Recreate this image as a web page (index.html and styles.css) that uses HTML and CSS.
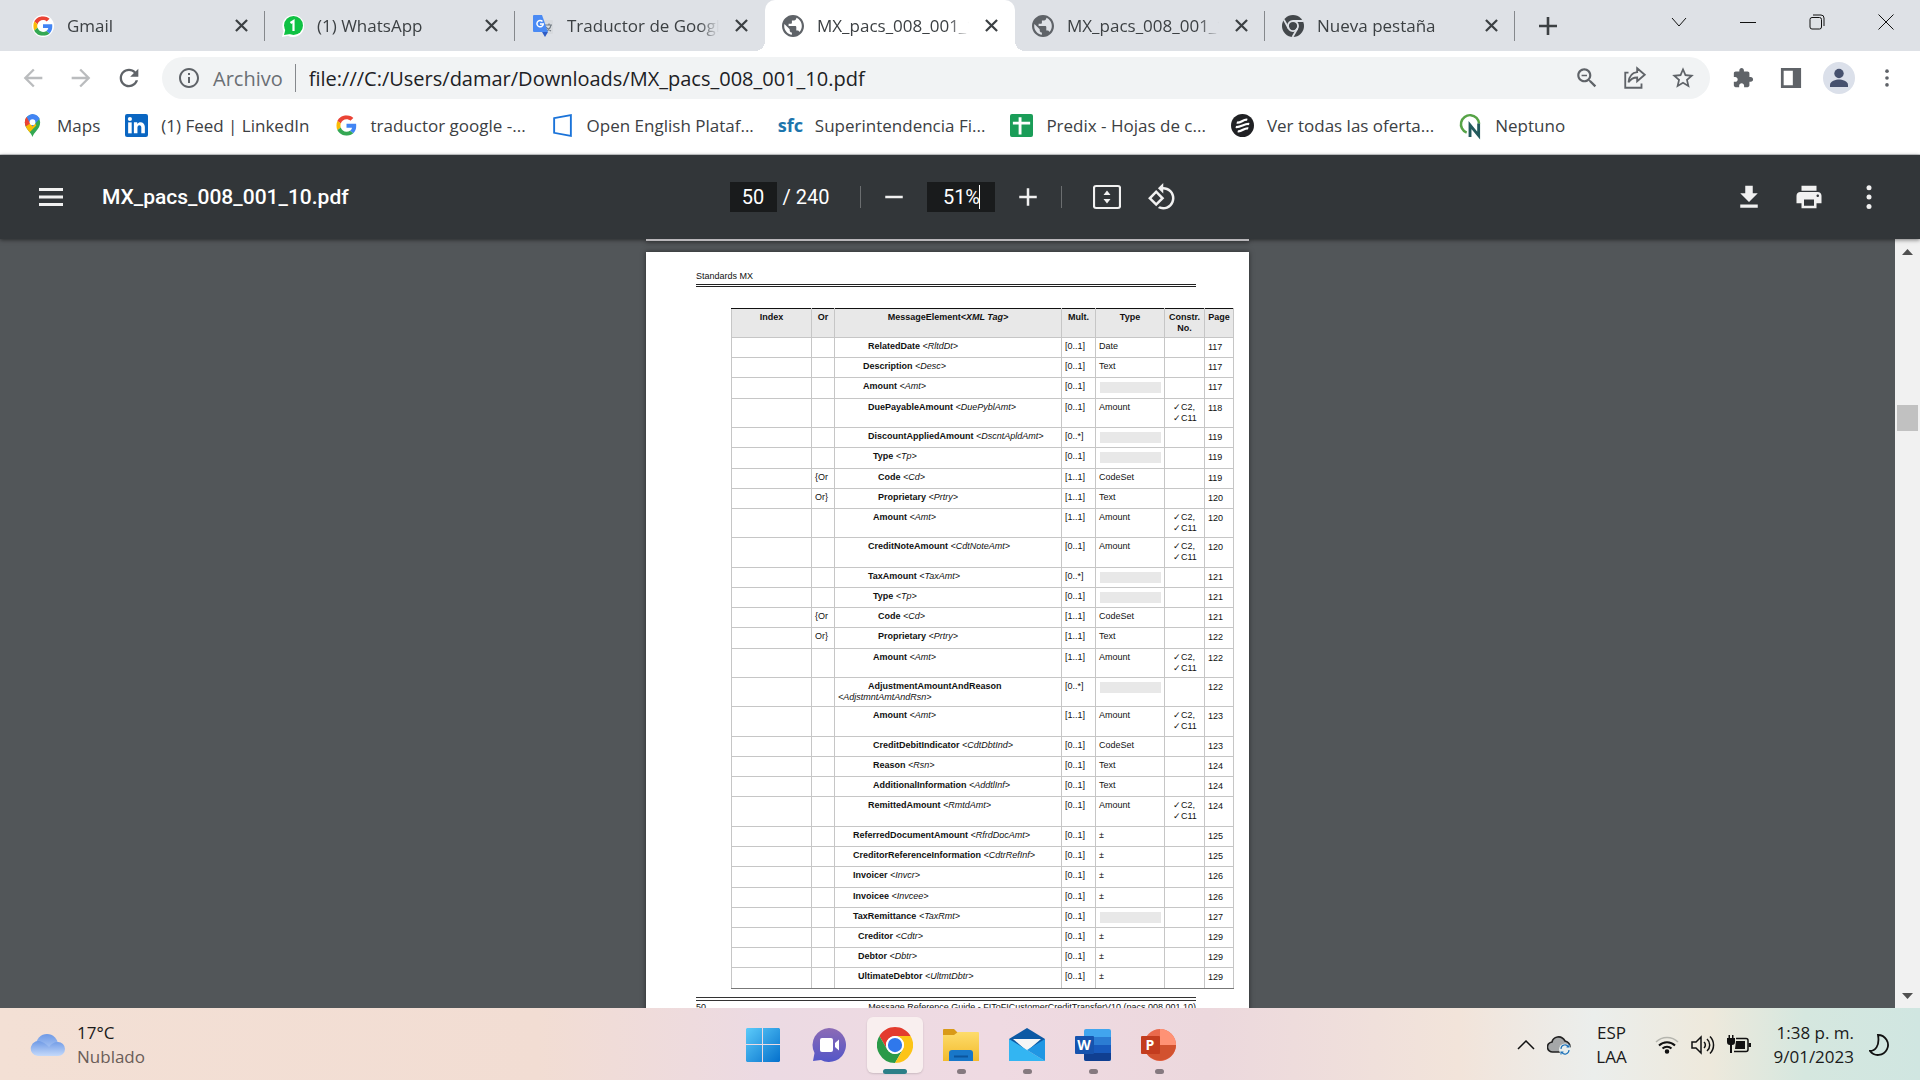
FILE: index.html
```html
<!DOCTYPE html>
<html lang="es">
<head>
  <meta charset="UTF-8">
  <title>MX_pacs_008_001_10.pdf</title>
  <link rel="stylesheet" href="styles.css">
</head>
<body>
  <svg class="defs" aria-hidden="true">
    <symbol id="google" viewBox="0 0 48 48">
      <path fill="#ea4335" d="M24 9.5c3.54 0 6.71 1.22 9.21 3.6l6.85-6.85C35.9 2.38 30.47 0 24 0 14.62 0 6.51 5.38 2.56 13.22l7.98 6.19C12.43 13.72 17.74 9.5 24 9.5z"/>
      <path fill="#4285f4" d="M46.98 24.55c0-1.57-.15-3.09-.38-4.55H24v9.02h12.94c-.58 2.96-2.26 5.48-4.78 7.18l7.73 6c4.51-4.18 7.09-10.36 7.09-17.65z"/>
      <path fill="#fbbc05" d="M10.53 28.59c-.48-1.45-.76-2.99-.76-4.59s.27-3.14.76-4.59l-7.98-6.19C.92 16.46 0 20.12 0 24c0 3.88.92 7.54 2.56 10.78l7.97-6.19z"/>
      <path fill="#34a853" d="M24 48c6.48 0 11.93-2.13 15.89-5.81l-7.73-6c-2.15 1.45-4.92 2.3-8.16 2.3-6.26 0-11.57-4.22-13.47-9.91l-7.98 6.19C6.51 42.62 14.62 48 24 48z"/>
    </symbol>
    <symbol id="globe" viewBox="2 2 20 20">
      <path d="M12 2C6.480 2 2 6.480 2 12s4.480 10 10 10 10-4.480 10-10S17.520 2 12 2zm-1 17.930c-3.950-.49-7-3.850-7-7.930 0-.62.08-1.210.21-1.790L9 15v1c0 1.100.9 2 2 2v1.930zm6.900-2.540c-.26-.81-1-1.390-1.900-1.390h-1v-3c0-.55-.45-1-1-1H8v-2h2c.55 0 1-.45 1-1V7h2c1.100 0 2-.9 2-2v-.41c2.930 1.190 5 4.060 5 7.410 0 2.080-.8 3.970-2.100 5.390z"/>
    </symbol>
    <symbol id="close" viewBox="0 0 14 14">
      <path d="M1 1l12 12M13 1L1 13" fill="none" stroke="#3c4043" stroke-width="2.4"/>
    </symbol>
    <symbol id="dots" viewBox="0 0 24 24">
      <circle cx="12" cy="4.500" r="2"/><circle cx="12" cy="12" r="2"/><circle cx="12" cy="19.500" r="2"/>
    </symbol>
  </svg>

  <header class="tabs">
    <div class="tab">
      <svg class="favicon round" viewBox="-3 -3 54 54"><use href="#google" width="48" height="48"/></svg>
      <span class="title">Gmail</span>
      <button class="tab-close" aria-label="Cerrar"><svg><use href="#close"/></svg></button>
    </div>
    <div class="tab">
      <svg class="favicon" viewBox="0 0 22 22"><path fill="#fff" d="M11 0a11 11 0 1 1-5 20.700L0 22l1.500-6A11 11 0 0 1 11 0z"/><circle cx="11.500" cy="10.500" r="9.500" fill="#0fc143"/><path fill="#0fc143" d="M2 20l1.500-6 5 5z"/><path d="M8.500 8l3-2v10" fill="none" stroke="#fff" stroke-width="2.200"/></svg>
      <span class="title">(1) WhatsApp</span>
      <button class="tab-close" aria-label="Cerrar"><svg><use href="#close"/></svg></button>
    </div>
    <div class="tab">
      <svg class="favicon" viewBox="0 0 22 22"><path fill="#d7dade" d="M10 5h10a1 1 0 0 1 1 1v12a1 1 0 0 1-1 1h-6z"/><path d="M13 10h7m-3-1.500V10m2 0c0 3-3 5-4 6m-1-4c1 2 3 3 5 4" fill="none" stroke="#737b83" stroke-width="1.200"/><path fill="#2f5cc5" d="M10 17l6 0-3 5z"/><path fill="#4a8af4" d="M2 0h8l6 17H2a1 1 0 0 1-1-1V1a1 1 0 0 1 1-1z"/><path d="M10.500 6.500A3.200 3.200 0 1 0 11.300 9H8" fill="none" stroke="#fff" stroke-width="1.500"/></svg>
      <span class="title">Traductor de Google</span>
      <button class="tab-close" aria-label="Cerrar"><svg><use href="#close"/></svg></button>
    </div>
    <div class="tab active">
      <svg class="favicon grey"><use href="#globe"/></svg>
      <span class="title">MX_pacs_008_001_10.pdf</span>
      <button class="tab-close" aria-label="Cerrar"><svg><use href="#close"/></svg></button>
    </div>
    <div class="tab">
      <svg class="favicon grey"><use href="#globe"/></svg>
      <span class="title">MX_pacs_008_001_10.pdf</span>
      <button class="tab-close" aria-label="Cerrar"><svg><use href="#close"/></svg></button>
    </div>
    <div class="tab">
      <svg class="favicon" viewBox="0 0 48 48"><circle cx="24" cy="24" r="24" fill="#43474b"/><circle cx="24" cy="24" r="11" fill="none" stroke="#dee1e6" stroke-width="4"/><path d="M24 13h23M14.500 29.500L4 10M33.500 29.500L23 48" stroke="#dee1e6" stroke-width="4"/></svg>
      <span class="title">Nueva pestaña</span>
      <button class="tab-close" aria-label="Cerrar"><svg><use href="#close"/></svg></button>
    </div>
    <button class="new-tab" aria-label="Nueva pestaña"><svg viewBox="0 0 18 18"><path d="M9 0v18M0 9h18" stroke="#3c4043" stroke-width="2.600"/></svg></button>
    <div class="window-controls">
      <button aria-label="Buscar pestañas"><svg viewBox="0 0 16 16"><path d="M1 4l7 8 7-8"/></svg></button>
      <button aria-label="Minimizar"><svg viewBox="0 0 16 16"><path d="M0 8.500h16"/></svg></button>
      <button aria-label="Restaurar"><svg viewBox="0 0 16 16"><rect x="1" y="3.500" width="11.500" height="11.500" rx="2"/><path d="M4 1h8a3 3 0 0 1 3 3v8"/></svg></button>
      <button aria-label="Cerrar ventana"><svg viewBox="0 0 16 16"><path d="M.5.5l15 15m0-15l-15 15"/></svg></button>
    </div>
  </header>

  <nav class="toolbar">
    <button class="muted" aria-label="Atrás"><svg viewBox="0 0 24 24"><path d="M20 11H7.830l5.590-5.590L12 4l-8 8 8 8 1.410-1.410L7.830 13H20v-2z"/></svg></button>
    <button class="muted" aria-label="Adelante"><svg viewBox="0 0 24 24"><path d="M12 4l-1.410 1.410L16.170 11H4v2h12.170l-5.580 5.590L12 20l8-8z"/></svg></button>
    <button aria-label="Recargar"><svg viewBox="0 0 24 24"><path d="M17.650 6.350C16.200 4.900 14.210 4 12 4c-4.420 0-7.990 3.580-7.990 8s3.570 8 7.990 8c3.730 0 6.840-2.550 7.730-6h-2.080c-.82 2.330-3.040 4-5.650 4-3.310 0-6-2.690-6-6s2.690-6 6-6c1.660 0 3.140.69 4.220 1.780L13 11h7V4l-2.350 2.350z"/></svg></button>
    <div class="omnibox">
      <svg class="info" viewBox="0 0 24 24"><path d="M11 7h2v2h-2zm0 4h2v6h-2zm1-9C6.480 2 2 6.480 2 12s4.480 10 10 10 10-4.480 10-10S17.520 2 12 2zm0 18c-4.410 0-8-3.590-8-8s3.590-8 8-8 8 3.590 8 8-3.590 8-8 8z"/></svg>
      <label for="url">Archivo</label>
      <input id="url" type="text" value="file:///C:/Users/damar/Downloads/MX_pacs_008_001_10.pdf">
      <button aria-label="Zoom"><svg viewBox="0 0 24 24"><path d="M15.500 14h-.79l-.28-.27C15.410 12.590 16 11.110 16 9.500 16 5.910 13.090 3 9.500 3S3 5.910 3 9.500 5.910 16 9.500 16c1.610 0 3.090-.59 4.230-1.570l.27.28v.79l5 4.990L20.490 19l-4.990-5zm-6 0C7.010 14 5 11.990 5 9.500S7.010 5 9.500 5 14 7.010 14 9.500 11.990 14 9.500 14zM7 9h5v1.300H7z"/></svg></button>
      <button aria-label="Compartir"><svg viewBox="0 0 24 24"><path d="M6 7H3v14h15v-4M14 3l7 6-7 6v-3.500c-4 0-6 1.500-8 4.500.500-5 3-9 8-9.500z" fill="none" stroke="#5f6368" stroke-width="1.700"/></svg></button>
      <button aria-label="Favorito"><svg viewBox="0 0 24 24"><path d="M22 9.240l-7.190-.62L12 2 9.190 8.630 2 9.240l5.460 4.730L5.820 21 12 17.270 18.180 21l-1.630-7.030L22 9.240zM12 15.400l-3.760 2.270 1-4.280-3.320-2.880 4.380-.38L12 6.100l1.710 4.040 4.380.38-3.320 2.880 1 4.280L12 15.400z"/></svg></button>
    </div>
    <button aria-label="Extensiones"><svg class="small" viewBox="0 0 24 24"><path d="M20.500 11H19V7c0-1.100-.9-2-2-2h-4V3.500C13 2.120 11.880 1 10.500 1S8 2.120 8 3.500V5H4c-1.100 0-1.990.9-1.990 2v3.800H3.500c1.490 0 2.700 1.210 2.700 2.700s-1.210 2.700-2.700 2.700H2V20c0 1.100.9 2 2 2h3.800v-1.500c0-1.490 1.210-2.700 2.700-2.700 1.490 0 2.700 1.210 2.700 2.700V22H17c1.100 0 2-.9 2-2v-4h1.500c1.380 0 2.500-1.120 2.500-2.500S21.880 11 20.500 11z"/></svg></button>
    <button aria-label="Panel lateral"><svg class="small" viewBox="0 0 24 24"><path fill-rule="evenodd" d="M1 1h22v22H1zM4 4v16h10V4z"/></svg></button>
    <button aria-label="Perfil"><svg class="avatar" viewBox="0 0 32 32"><circle cx="16" cy="16" r="16" fill="#dbe0ea"/><circle cx="16" cy="11.500" r="4.700"/><path d="M7 25v-2c0-4 6-5.500 9-5.500s9 1.500 9 5.500v2z"/></svg></button>
    <button aria-label="Menú"><svg class="small"><use href="#dots"/></svg></button>
  </nav>

  <nav class="bookmarks">
    <a href="#"><svg viewBox="0 0 24 24"><path fill="#34a853" d="M12 24c-1-5-8-8-8-15.500a8 8 0 0 1 16 0C20 16 13 19 12 24z"/><path fill="#fbbc04" d="M5 12.500L12 4l4 8-7 7c-2-2.500-3.500-4.500-4-6.500z"/><path fill="#ea4335" d="M4 8.500C4 5.500 5.500 3 6 3l6 5-7 5c-.7-1.500-1-3-1-4.500z"/><path fill="#4285f4" d="M6 3a8 8 0 0 1 13.500 2L12 13 8 7z"/><circle cx="12" cy="8.500" r="3" fill="#fff"/></svg>Maps</a>
    <a href="#"><svg viewBox="0 0 22 22"><rect width="22" height="22" rx="2" fill="#0a66c2"/><rect x="3" y="8" width="3.400" height="10.500" fill="#fff"/><circle cx="4.700" cy="4.800" r="2" fill="#fff"/><path fill="#fff" d="M8.500 8h3.200v1.500c2-3 7.300-2 7.300 2.800v6.200h-3.400v-5.500c0-3.200-3.700-3-3.700 0v5.500H8.500z"/></svg>(1) Feed | LinkedIn</a>
    <a href="#"><svg viewBox="-3 -3 54 54"><use href="#google" width="48" height="48"/></svg>traductor google -...</a>
    <a href="#"><svg viewBox="0 0 22 22"><path d="M3 4l16-3v20L3 18z" fill="none" stroke="#1a73d9" stroke-width="1.800"/></svg>Open English Plataf...</a>
    <a href="#"><svg viewBox="0 0 24 24"><text class="sfc" x="12" y="19">sfc</text></svg>Superintendencia Fi...</a>
    <a href="#"><svg viewBox="0 0 24 24"><rect width="24" height="24" rx="2" fill="#1a9d58"/><path d="M10.500 3.500v18M3 9.500h18" stroke="#fff" stroke-width="3"/></svg>Predix - Hojas de c...</a>
    <a href="#"><svg viewBox="0 0 24 24"><circle cx="12" cy="12" r="12" fill="#202124"/><path d="M6 9c4 1 7-4 11-3M5 13.500c4 1 10-4 14-3M7 18c4 1 7-4 11-3" fill="none" stroke="#fff" stroke-width="2.400"/></svg>Ver todas las oferta...</a>
    <a href="#"><svg viewBox="0 0 24 24"><path d="M8 19.500A9.500 9.500 0 1 1 21 10" fill="none" stroke="#56a346" stroke-width="2.600"/><path d="M11.500 24V11.500l9 11V10" fill="none" stroke="#235a5c" stroke-width="3"/></svg>Neptuno</a>
  </nav>

  <section class="pdf-bar">
    <div class="pdf-left">
      <button aria-label="Menú lateral"><svg viewBox="0 0 24 24"><path d="M0 3h24v3H0zm0 7.500h24v3H0zM0 18h24v3H0z"/></svg></button>
      <span class="file-name">MX_pacs_008_001_10.pdf</span>
    </div>
    <div class="pdf-center">
      <input class="page-input" type="text" value="50" aria-label="Página">
      <span class="pages">/ 240</span>
      <span class="rule"></span>
      <button aria-label="Reducir"><svg viewBox="0 0 24 24"><path d="M5 11h14v2H5z"/></svg></button>
      <div class="zoom"><input type="text" value="51%" aria-label="Zoom"><i class="caret"></i></div>
      <button aria-label="Ampliar"><svg viewBox="0 0 24 24"><path d="M19 13h-6v6h-2v-6H5v-2h6V5h2v6h6v2z"/></svg></button>
      <span class="rule"></span>
      <button class="fit" aria-label="Ajustar a la página"><svg viewBox="0 0 28 24"><rect x="1" y="1" width="26" height="22" rx="2" fill="none" stroke="#f1f1f1" stroke-width="2.200"/><path d="M10.500 10L14 5.500l3.500 4.500zM10.500 14l3.500 4.500 3.500-4.500z"/></svg></button>
      <button class="rotate" aria-label="Girar"><svg viewBox="0 0 24 24"><path d="M7.340 6.410L.86 12.900l6.490 6.480 6.490-6.480-6.500-6.490zM3.690 12.900l3.660-3.660L11 12.900l-3.660 3.660-3.650-3.660zm15.670-6.260C17.610 4.880 15.300 4 13 4V.76L8.760 5 13 9.240V6c1.790 0 3.580.68 4.950 2.050 2.730 2.730 2.730 7.170 0 9.900C16.580 19.320 14.790 20 13 20c-.97 0-1.940-.21-2.840-.61l-1.490 1.490C10.020 21.620 11.510 22 13 22c2.300 0 4.610-.88 6.360-2.640 3.520-3.510 3.520-9.210 0-12.720z"/></svg></button>
    </div>
    <div class="pdf-right">
      <button aria-label="Descargar"><svg viewBox="0 0 24 24"><path d="M19 9h-4V3H9v6H5l7 7 7-7zM5 18v2.500h14V18H5z"/></svg></button>
      <button aria-label="Imprimir"><svg viewBox="0 0 24 24"><path d="M19 8H5c-1.660 0-3 1.340-3 3v6h4v4h12v-4h4v-6c0-1.660-1.340-3-3-3zm-3 11H8v-5h8v5zm3-7c-.55 0-1-.45-1-1s.45-1 1-1 1 .45 1 1-.45 1-1 1zm-1-9H6v4h12V3z"/></svg></button>
      <button aria-label="Más"><svg><use href="#dots"/></svg></button>
    </div>
  </section>

  <main class="viewer">
    <div class="pages-view">
      <div class="prev-page"></div>
      <article class="page">
        <div class="page-head">Standards MX</div>
        <table>
          <colgroup><col class="c-index"><col class="c-or"><col><col class="c-mult"><col class="c-type"><col class="c-constr"><col class="c-page"></colgroup>
          <thead>
            <tr><th>Index</th><th>Or</th><th>MessageElement<i>&lt;XML Tag&gt;</i></th><th>Mult.</th><th>Type</th><th>Constr. No.</th><th>Page</th></tr>
          </thead>
          <tbody>
            <tr><td></td><td></td><td class="l6"><b>RelatedDate</b> <i>&lt;RltdDt&gt;</i></td><td>[0..1]</td><td>Date</td><td></td><td>117</td></tr>
            <tr><td></td><td></td><td class="l5"><b>Description</b> <i>&lt;Desc&gt;</i></td><td>[0..1]</td><td>Text</td><td></td><td>117</td></tr>
            <tr><td></td><td></td><td class="l5"><b>Amount</b> <i>&lt;Amt&gt;</i></td><td>[0..1]</td><td><div class="blank"></div></td><td></td><td>117</td></tr>
            <tr><td></td><td></td><td class="l6"><b>DuePayableAmount</b> <i>&lt;DuePyblAmt&gt;</i></td><td>[0..1]</td><td>Amount</td><td>✓C2,<br>✓C11</td><td>118</td></tr>
            <tr><td></td><td></td><td class="l6"><b>DiscountAppliedAmount</b> <i>&lt;DscntApldAmt&gt;</i></td><td>[0..*]</td><td><div class="blank"></div></td><td></td><td>119</td></tr>
            <tr><td></td><td></td><td class="l7"><b>Type</b> <i>&lt;Tp&gt;</i></td><td>[0..1]</td><td><div class="blank"></div></td><td></td><td>119</td></tr>
            <tr><td></td><td>{Or</td><td class="l8"><b>Code</b> <i>&lt;Cd&gt;</i></td><td>[1..1]</td><td>CodeSet</td><td></td><td>119</td></tr>
            <tr><td></td><td>Or}</td><td class="l8"><b>Proprietary</b> <i>&lt;Prtry&gt;</i></td><td>[1..1]</td><td>Text</td><td></td><td>120</td></tr>
            <tr><td></td><td></td><td class="l7"><b>Amount</b> <i>&lt;Amt&gt;</i></td><td>[1..1]</td><td>Amount</td><td>✓C2,<br>✓C11</td><td>120</td></tr>
            <tr><td></td><td></td><td class="l6"><b>CreditNoteAmount</b> <i>&lt;CdtNoteAmt&gt;</i></td><td>[0..1]</td><td>Amount</td><td>✓C2,<br>✓C11</td><td>120</td></tr>
            <tr><td></td><td></td><td class="l6"><b>TaxAmount</b> <i>&lt;TaxAmt&gt;</i></td><td>[0..*]</td><td><div class="blank"></div></td><td></td><td>121</td></tr>
            <tr><td></td><td></td><td class="l7"><b>Type</b> <i>&lt;Tp&gt;</i></td><td>[0..1]</td><td><div class="blank"></div></td><td></td><td>121</td></tr>
            <tr><td></td><td>{Or</td><td class="l8"><b>Code</b> <i>&lt;Cd&gt;</i></td><td>[1..1]</td><td>CodeSet</td><td></td><td>121</td></tr>
            <tr><td></td><td>Or}</td><td class="l8"><b>Proprietary</b> <i>&lt;Prtry&gt;</i></td><td>[1..1]</td><td>Text</td><td></td><td>122</td></tr>
            <tr><td></td><td></td><td class="l7"><b>Amount</b> <i>&lt;Amt&gt;</i></td><td>[1..1]</td><td>Amount</td><td>✓C2,<br>✓C11</td><td>122</td></tr>
            <tr><td></td><td></td><td class="l6"><b>AdjustmentAmountAndReason</b> <i>&lt;AdjstmntAmtAndRsn&gt;</i></td><td>[0..*]</td><td><div class="blank"></div></td><td></td><td>122</td></tr>
            <tr><td></td><td></td><td class="l7"><b>Amount</b> <i>&lt;Amt&gt;</i></td><td>[1..1]</td><td>Amount</td><td>✓C2,<br>✓C11</td><td>123</td></tr>
            <tr><td></td><td></td><td class="l7"><b>CreditDebitIndicator</b> <i>&lt;CdtDbtInd&gt;</i></td><td>[0..1]</td><td>CodeSet</td><td></td><td>123</td></tr>
            <tr><td></td><td></td><td class="l7"><b>Reason</b> <i>&lt;Rsn&gt;</i></td><td>[0..1]</td><td>Text</td><td></td><td>124</td></tr>
            <tr><td></td><td></td><td class="l7"><b>AdditionalInformation</b> <i>&lt;AddtlInf&gt;</i></td><td>[0..1]</td><td>Text</td><td></td><td>124</td></tr>
            <tr><td></td><td></td><td class="l6"><b>RemittedAmount</b> <i>&lt;RmtdAmt&gt;</i></td><td>[0..1]</td><td>Amount</td><td>✓C2,<br>✓C11</td><td>124</td></tr>
            <tr><td></td><td></td><td class="l3"><b>ReferredDocumentAmount</b> <i>&lt;RfrdDocAmt&gt;</i></td><td>[0..1]</td><td>±</td><td></td><td>125</td></tr>
            <tr><td></td><td></td><td class="l3"><b>CreditorReferenceInformation</b> <i>&lt;CdtrRefInf&gt;</i></td><td>[0..1]</td><td>±</td><td></td><td>125</td></tr>
            <tr><td></td><td></td><td class="l3"><b>Invoicer</b> <i>&lt;Invcr&gt;</i></td><td>[0..1]</td><td>±</td><td></td><td>126</td></tr>
            <tr><td></td><td></td><td class="l3"><b>Invoicee</b> <i>&lt;Invcee&gt;</i></td><td>[0..1]</td><td>±</td><td></td><td>126</td></tr>
            <tr><td></td><td></td><td class="l3"><b>TaxRemittance</b> <i>&lt;TaxRmt&gt;</i></td><td>[0..1]</td><td><div class="blank"></div></td><td></td><td>127</td></tr>
            <tr><td></td><td></td><td class="l4"><b>Creditor</b> <i>&lt;Cdtr&gt;</i></td><td>[0..1]</td><td>±</td><td></td><td>129</td></tr>
            <tr><td></td><td></td><td class="l4"><b>Debtor</b> <i>&lt;Dbtr&gt;</i></td><td>[0..1]</td><td>±</td><td></td><td>129</td></tr>
            <tr><td></td><td></td><td class="l4"><b>UltimateDebtor</b> <i>&lt;UltmtDbtr&gt;</i></td><td>[0..1]</td><td>±</td><td></td><td>129</td></tr>
          </tbody>
        </table>
        <div class="page-foot"><span>50</span><span>Message Reference Guide - FIToFICustomerCreditTransferV10 (pacs.008.001.10)</span></div>
      </article>
    </div>
    <div class="scrollbar">
      <svg viewBox="0 0 11 6"><path d="M0 6l5.500-6L11 6z"/></svg>
      <div class="thumb"></div>
      <svg viewBox="0 0 11 6"><path d="M0 0l5.500 6L11 0z"/></svg>
    </div>
  </main>

  <footer class="taskbar">
    <div class="weather">
      <svg viewBox="0 0 36 24"><defs><linearGradient id="cloud" x2="0" y2="1"><stop stop-color="#6f9ae6"/><stop offset="1" stop-color="#c4d9fa"/></linearGradient></defs><circle cx="17" cy="12" r="11" fill="url(#cloud)"/><path fill="url(#cloud)" d="M8 23a7.500 7.500 0 1 1 4-14c3 1 5 3 7 5 2-3 5-5 9-5a7 7 0 0 1 0 14z"/></svg>
      <div><div>17°C</div><div class="sub">Nublado</div></div>
    </div>
    <div class="apps">
      <button aria-label="Inicio"><svg viewBox="0 0 36 36"><defs><linearGradient id="win" x2="1" y2="1"><stop stop-color="#5ccbfa"/><stop offset="1" stop-color="#0470cc"/></linearGradient></defs><path fill="url(#win)" d="M2 1h15v16H1V2zM18 1h16l1 1v15H18zM1 18h16v17H2l-1-1zM18 18h17v16l-1 1H18z"/></svg></button>
      <button aria-label="Chat"><svg viewBox="0 0 36 36"><defs><linearGradient id="chat" x2="0" y2="1"><stop stop-color="#8c6bb5"/><stop offset="1" stop-color="#5356c8"/></linearGradient></defs><path fill="url(#chat)" d="M18 1a17 17 0 1 1-8 32l-8 1 1.500-8A17 17 0 0 1 18 1z"/><rect x="9" y="11" width="13" height="14" rx="2" fill="#fff"/><path fill="#fff" d="M24 16l4-3.500v11L24 20z"/></svg></button>
      <button class="current" aria-label="Chrome"><svg viewBox="0 0 48 48"><path fill="#e33b2e" d="M24 12h20.780A24 24 0 0 0 3.215 12l10.393 18A12 12 0 0 1 24 12z"/><path fill="#2a9a48" d="M13.608 30L3.215 12A24 24 0 0 0 24 48l10.390-18a12 12 0 0 1-20.782 0z"/><path fill="#fcc417" d="M34.390 30L24 48a24 24 0 0 0 20.785-36H24a12 12 0 0 1 10.390 18z"/><circle cx="24" cy="24" r="12" fill="#fff"/><circle cx="24" cy="24" r="9.500" fill="#2f78ec"/></svg></button>
      <button class="open" aria-label="Explorador"><svg viewBox="0 0 36 36"><path fill="#d99a17" d="M0 3a1 1 0 0 1 1-1h10l4 4-3 4H0z"/><defs><linearGradient id="folder" x2="0" y2="1"><stop stop-color="#fddc6b"/><stop offset="1" stop-color="#f3bb2d"/></linearGradient></defs><path fill="url(#folder)" d="M0 8h11l4-3h20a1 1 0 0 1 1 1v28H0z"/><path fill="#1877c9" d="M6 34V26a3 3 0 0 1 3-3h18a3 3 0 0 1 3 3v8z"/><path d="M11 29.500h14" stroke="#0b559d" stroke-width="2"/></svg></button>
      <button class="open" aria-label="Correo"><svg viewBox="0 0 36 36"><path fill="#0c59a4" d="M0 12L18 1l18 11v10H0z"/><path fill="#f6f6f6" d="M4 12h28L18 24z"/><path fill="#33b5f2" d="M0 12l36 22H0z"/><path fill="#2096e3" d="M36 12v22L18 23z"/></svg></button>
      <button class="open" aria-label="Word"><svg viewBox="0 0 36 36"><rect x="9" y="2" width="27" height="32" rx="2" fill="#41a5ee"/><path fill="#2b7cd3" d="M9 10h27v8H9z"/><path fill="#185abd" d="M9 18h27v8H9z"/><path fill="#103f91" d="M9 26h27v6a2 2 0 0 1-2 2H11a2 2 0 0 1-2-2z"/><rect y="9" width="19" height="18" rx="1" fill="#1653ae"/><text class="office" x="9" y="23">W</text></svg></button>
      <button class="open" aria-label="PowerPoint"><svg viewBox="0 0 36 36"><circle cx="19" cy="18" r="16" fill="#e9694c"/><path fill="#ff9275" d="M19 2a16 16 0 0 1 16 16H19z"/><path fill="#d2522f" d="M35 18a16 16 0 0 1-31 5l15-5z"/><rect y="9" width="19" height="18" rx="1" fill="#c33c1e"/><text class="office" x="9" y="23">P</text></svg></button>
    </div>
    <div class="tray">
      <svg class="chev" viewBox="0 0 18 10"><path d="M1 9l8-8 8 8"/></svg>
      <svg class="cloud" viewBox="0 0 24 20"><path fill="#a5a7a8" stroke="#222" stroke-width="1.600" d="M6 17a5 5 0 0 1-1-10c1-5 9-8 13-1 4 1 5 4 5 6l-8 5z"/><circle cx="18" cy="14.500" r="6" fill="#e8eeed" stroke="none"/><path d="M14 14a4 4 0 0 1 7.500-2m.5 3a4 4 0 0 1-7.500 2M22 9.500V12h-2.500M14 19.500V17h2.500" stroke="#1c70b8" stroke-width="1.100"/></svg>
      <div class="lang"><div>ESP</div><div>LAA</div></div>
      <svg class="net" viewBox="0 0 24 20"><path d="M1 7a15.500 15.500 0 0 1 22 0" stroke="#b5b5ae"/><path d="M4 10.500a11.500 11.500 0 0 1 16 0M7.500 13.500a6.500 6.500 0 0 1 9 0" stroke-width="2"/><circle cx="12" cy="16.500" r="1.500" fill="#111"/></svg>
      <svg class="net" viewBox="0 0 24 20"><path d="M1 7h4l5-5v16l-5-5H1zM13 7a4 4 0 0 1 0 6M16 4a8 8 0 0 1 0 12M19 1.500a12 12 0 0 1 0 17"/></svg>
      <svg class="net" viewBox="0 0 24 20"><path d="M9 3.500h10a2 2 0 0 1 2 2v9a2 2 0 0 1-2 2H7"/><path fill="#111" d="M9 6h9v8H8zM21.500 8H24v4h-2.500zM0 3h8v4a3 3 0 0 1-3 3v8H3v-8a3 3 0 0 1-3-3zM1.500 0h1.500v3H1.500zM5 0h1.500v3H5z" stroke="none"/></svg>
      <div class="clock"><div>1:38 p. m.</div><div>9/01/2023</div></div>
      <svg class="moon" viewBox="0 0 20 22"><path d="M9 1a10 10 0 1 1-8 16c5 0 10-5 8-16z" stroke-width="1.800"/></svg>
    </div>
  </footer>
</body>
</html>
```
FILE: styles.css
```css
* {
  box-sizing: border-box;
}
body {
  margin: 0;
  height: 100vh;
  display: flex;
  flex-direction: column;
  overflow: hidden;
  font-family: "Open Sans", "Noto Sans", sans-serif;
  font-size: 17px;
  color: #3c4043;
  background: #fff;
}
button {
  padding: 0;
  border: none;
  background: none;
  display: flex;
  align-items: center;
  justify-content: center;
}
svg {
  display: block;
  flex: none;
}
.defs {
  position: absolute;
  width: 0;
  height: 0;
}
input {
  border: none;
  padding: 0;
  outline: none;
}

/* Tab strip */
.tabs {
  display: flex;
  height: 51px;
  flex: none;
  padding-left: 15px;
  background: #dee1e6;
}
.tab {
  position: relative;
  display: flex;
  align-items: center;
  flex: 0 1 250px;
  min-width: 0;
  padding: 0 17px;
}
.tab::after {
  content: "";
  position: absolute;
  right: 0;
  top: 11px;
  width: 1px;
  height: 30px;
  background: #85888c;
}
.tab.active {
  background: #fff;
  border-radius: 10px 10px 0 0;
}
.tab.active::after,
.tab.active::before {
  content: "";
  position: absolute;
  top: auto;
  bottom: 0;
  width: 10px;
  height: 10px;
}
.tab.active::before {
  left: -10px;
  background: radial-gradient(circle at 0 0, #dee1e6 10px, #fff 10px);
}
.tab.active::after {
  right: -10px;
  background: radial-gradient(circle at 100% 0, #dee1e6 10px, #fff 10px);
}
.tab:has(+ .active)::after {
  display: none;
}
.favicon {
  width: 22px;
  height: 22px;
}
.favicon.round {
  background: #fff;
  border-radius: 50%;
}
.grey {
  fill: #5f6368;
}
.title {
  flex: 1;
  min-width: 0;
  margin: 0 16px 0 13px;
  overflow: hidden;
  white-space: nowrap;
  -webkit-mask-image: linear-gradient(to left, transparent, #000 20px);
  mask-image: linear-gradient(to left, transparent, #000 20px);
}
.tab-close svg {
  width: 13px;
  height: 13px;
}
.new-tab {
  width: 66px;
}
.new-tab svg {
  width: 18px;
  height: 18px;
}
.window-controls {
  display: flex;
  margin-left: auto;
}
.window-controls button {
  width: 69px;
  height: 44px;
}
.window-controls svg {
  width: 16px;
  height: 16px;
  fill: none;
  stroke: #111;
}

/* Address bar */
.toolbar {
  display: flex;
  align-items: center;
  flex: none;
  height: 54px;
  padding: 0 9px;
}
.toolbar button {
  width: 48px;
  height: 42px;
}
.toolbar svg {
  width: 28px;
  height: 28px;
  fill: #5f6368;
}
.toolbar .muted svg {
  fill: #babcbe;
}
.omnibox {
  display: flex;
  align-items: center;
  flex: 1;
  height: 42px;
  margin: 0 9px;
  padding: 0 3px 0 15px;
  border-radius: 21px;
  background: #f1f3f4;
}
.toolbar .info {
  width: 24px;
  height: 24px;
}
.omnibox label {
  margin: 0 12px;
  font-size: 20px;
  color: #6b6f74;
}
.omnibox input {
  flex: 1;
  height: 28px;
  padding-left: 13px;
  border-left: 1px solid #85888c;
  font: 20px "Open Sans", "Noto Sans", sans-serif;
  color: #202124;
  background: none;
}
.omnibox svg {
  width: 26px;
  height: 26px;
}
.toolbar .small {
  width: 22px;
  height: 22px;
}
.toolbar .avatar {
  width: 32px;
  height: 32px;
  fill: #46516e;
}

/* Bookmarks */
.bookmarks {
  display: flex;
  gap: 25px;
  flex: none;
  height: 50px;
  padding: 0 21px 8px;
  border-bottom: 1px solid #d0d2d4;
}
.bookmarks a {
  display: flex;
  align-items: center;
  gap: 13px;
  color: #3c4043;
  text-decoration: none;
  white-space: nowrap;
}
.bookmarks svg {
  width: 23px;
  height: 23px;
  overflow: visible;
}
.sfc {
  font: bold 19px "Open Sans", sans-serif;
  text-anchor: middle;
  fill: #1d75ad;
}

/* PDF toolbar */
.pdf-bar {
  position: relative;
  z-index: 1;
  display: grid;
  grid-template-columns: 1fr auto 1fr;
  align-items: center;
  flex: none;
  height: 84px;
  background: #323639;
  box-shadow: 0 1px 4px rgba(0, 0, 0, 0.5);
  font-family: Roboto, sans-serif;
  font-size: 20px;
  color: #fff;
}
.pdf-bar svg {
  width: 30px;
  height: 30px;
  fill: #f1f1f1;
}
.pdf-left,
.pdf-center,
.pdf-right {
  display: flex;
  align-items: center;
}
.pdf-left {
  padding-left: 39px;
  gap: 39px;
}
.pdf-left svg {
  width: 24px;
  height: 24px;
}
.file-name {
  font-size: 21px;
  font-weight: 500;
}
.pdf-center {
  gap: 15px;
  padding-right: 10px;
}
.pdf-center input {
  height: 30px;
  font: 20px Roboto, sans-serif;
  text-align: center;
  color: #fff;
  background: #191b1c;
}
.page-input {
  width: 47px;
}
.pages {
  margin: 0 16px 0 -9px;
}
.rule {
  width: 1px;
  height: 22px;
  background: #6b6e70;
}
.pdf-center button {
  width: 36px;
  height: 36px;
}
.zoom {
  position: relative;
}
.zoom input {
  display: block;
  width: 68px;
}
.caret {
  position: absolute;
  right: 15px;
  top: 3px;
  width: 1px;
  height: 24px;
  background: #fff;
}
.pdf-center .fit {
  margin-left: 12px;
}
.pdf-center .fit svg {
  width: 28px;
  height: 26px;
}
.pdf-center .rotate {
  margin-left: 4px;
}
.pdf-right {
  justify-content: flex-end;
  padding-right: 21px;
}
.pdf-right button {
  width: 60px;
}

/* Document */
.viewer {
  display: flex;
  flex: 1;
  min-height: 0;
  background: #525659;
}
.pages-view {
  flex: 1;
  overflow: hidden;
}
.prev-page {
  position: relative;
  z-index: 2;
  width: 603px;
  height: 2px;
  margin: 0 auto 11px;
  background: #b9b7ba;
  box-shadow: 0 1px 4px rgba(0, 0, 0, 0.6);
}
.page {
  width: 603px;
  margin: 0 auto;
  padding: 19px 15px 40px 50px;
  background: #fff;
  box-shadow: 0 0 5px rgba(0, 0, 0, 0.5);
  font: 9px/11px "Liberation Sans", Arial, sans-serif;
  color: #111;
}
.page-head {
  width: 500px;
  height: 16px;
  margin-bottom: 21px;
  border-bottom: 3px double #222;
}
table {
  width: 503px;
  height: 681px;
  margin-left: 35px;
  table-layout: fixed;
  border-collapse: collapse;
  border-top: 1px solid #111;
  border-bottom: 1px solid #777;
}
.c-index { width: 80px; }
.c-or { width: 23px; }
.c-mult { width: 34px; }
.c-type { width: 69px; }
.c-constr { width: 40px; }
.c-page { width: 29px; }
th,
td {
  padding: 3px;
  border: 1px solid #c6c6c6;
  vertical-align: top;
  text-align: left;
}
th {
  padding: 3px 0;
  border-top-color: #111;
  text-align: center;
  background: #e8e8e8;
}
td {
  height: 20px;
}
tr:last-child td {
  border-bottom-color: #777;
}
td:nth-child(6) {
  padding-left: 8px;
}
td:nth-child(7) {
  padding-top: 4px;
  padding-bottom: 2px;
}
.l3 { text-indent: 15px; }
.l4 { text-indent: 20px; }
.l5 { text-indent: 25px; }
.l6 { text-indent: 30px; }
.l7 { text-indent: 35px; }
.l8 { text-indent: 40px; }
.blank {
  height: 11px;
  margin: 1px 0 0 1px;
  background: #e8e8e8;
}
.page-foot {
  display: flex;
  justify-content: space-between;
  width: 500px;
  margin-top: 8px;
  padding-top: 1px;
  border-top: 4px double #333;
}
.scrollbar {
  display: flex;
  flex-direction: column;
  align-items: center;
  width: 25px;
  padding: 10px 0 9px;
  background: #f1f1f1;
}
.scrollbar svg {
  width: 11px;
  height: 6px;
  fill: #505050;
}
.thumb {
  width: 21px;
  height: 26px;
  margin: 150px 0 auto;
  background: #c1c1c1;
}

/* Taskbar */
.taskbar {
  display: grid;
  grid-template-columns: 1fr auto 1fr;
  align-items: center;
  flex: none;
  height: 72px;
  padding-top: 2px;
  line-height: 24px;
  color: #1a1a1a;
  background: linear-gradient(90deg, #f3e0d5 0, #f2ddd3 28%, #ecdae3 40%, #efdae2 52%, #ecd8dd 63%, #f2e4da 76%, #ebeeec 83%, #eee9dc 89%, #d5e7df 94%, #d0e6e1 100%);
}
.weather {
  display: flex;
  align-items: center;
  gap: 11px;
  padding-left: 30px;
}
.weather svg {
  width: 36px;
  height: 24px;
}
.sub {
  color: #6a5d58;
}
.apps {
  display: flex;
  gap: 10px;
  padding-left: 2px;
}
.apps button {
  position: relative;
  width: 56px;
  height: 56px;
  border-radius: 6px;
}
.apps svg {
  width: 36px;
  height: 36px;
}
.apps .current {
  background: #f9efef;
  box-shadow: 0 1px 2px rgba(0, 0, 0, 0.15);
}
.open::after,
.current::after {
  content: "";
  position: absolute;
  bottom: -1px;
  width: 9px;
  height: 5px;
  border-radius: 3px;
  background: #85797f;
}
.current::after {
  width: 24px;
  background: #2d7f88;
}
.office {
  font: bold 14px "Open Sans", sans-serif;
  text-anchor: middle;
  fill: #fff;
}
.tray {
  display: flex;
  align-items: center;
  justify-content: flex-end;
  gap: 12px;
  padding-right: 31px;
}
.tray svg {
  width: 24px;
  height: 20px;
  fill: none;
  stroke: #111;
  stroke-width: 1.500;
}
.tray .chev {
  width: 18px;
  height: 10px;
}
.lang {
  width: 60px;
  padding-right: 4px;
  text-align: center;
}
.clock {
  padding-left: 10px;
  text-align: right;
}
.tray .moon {
  width: 20px;
  height: 22px;
  margin-left: 3px;
}
```
